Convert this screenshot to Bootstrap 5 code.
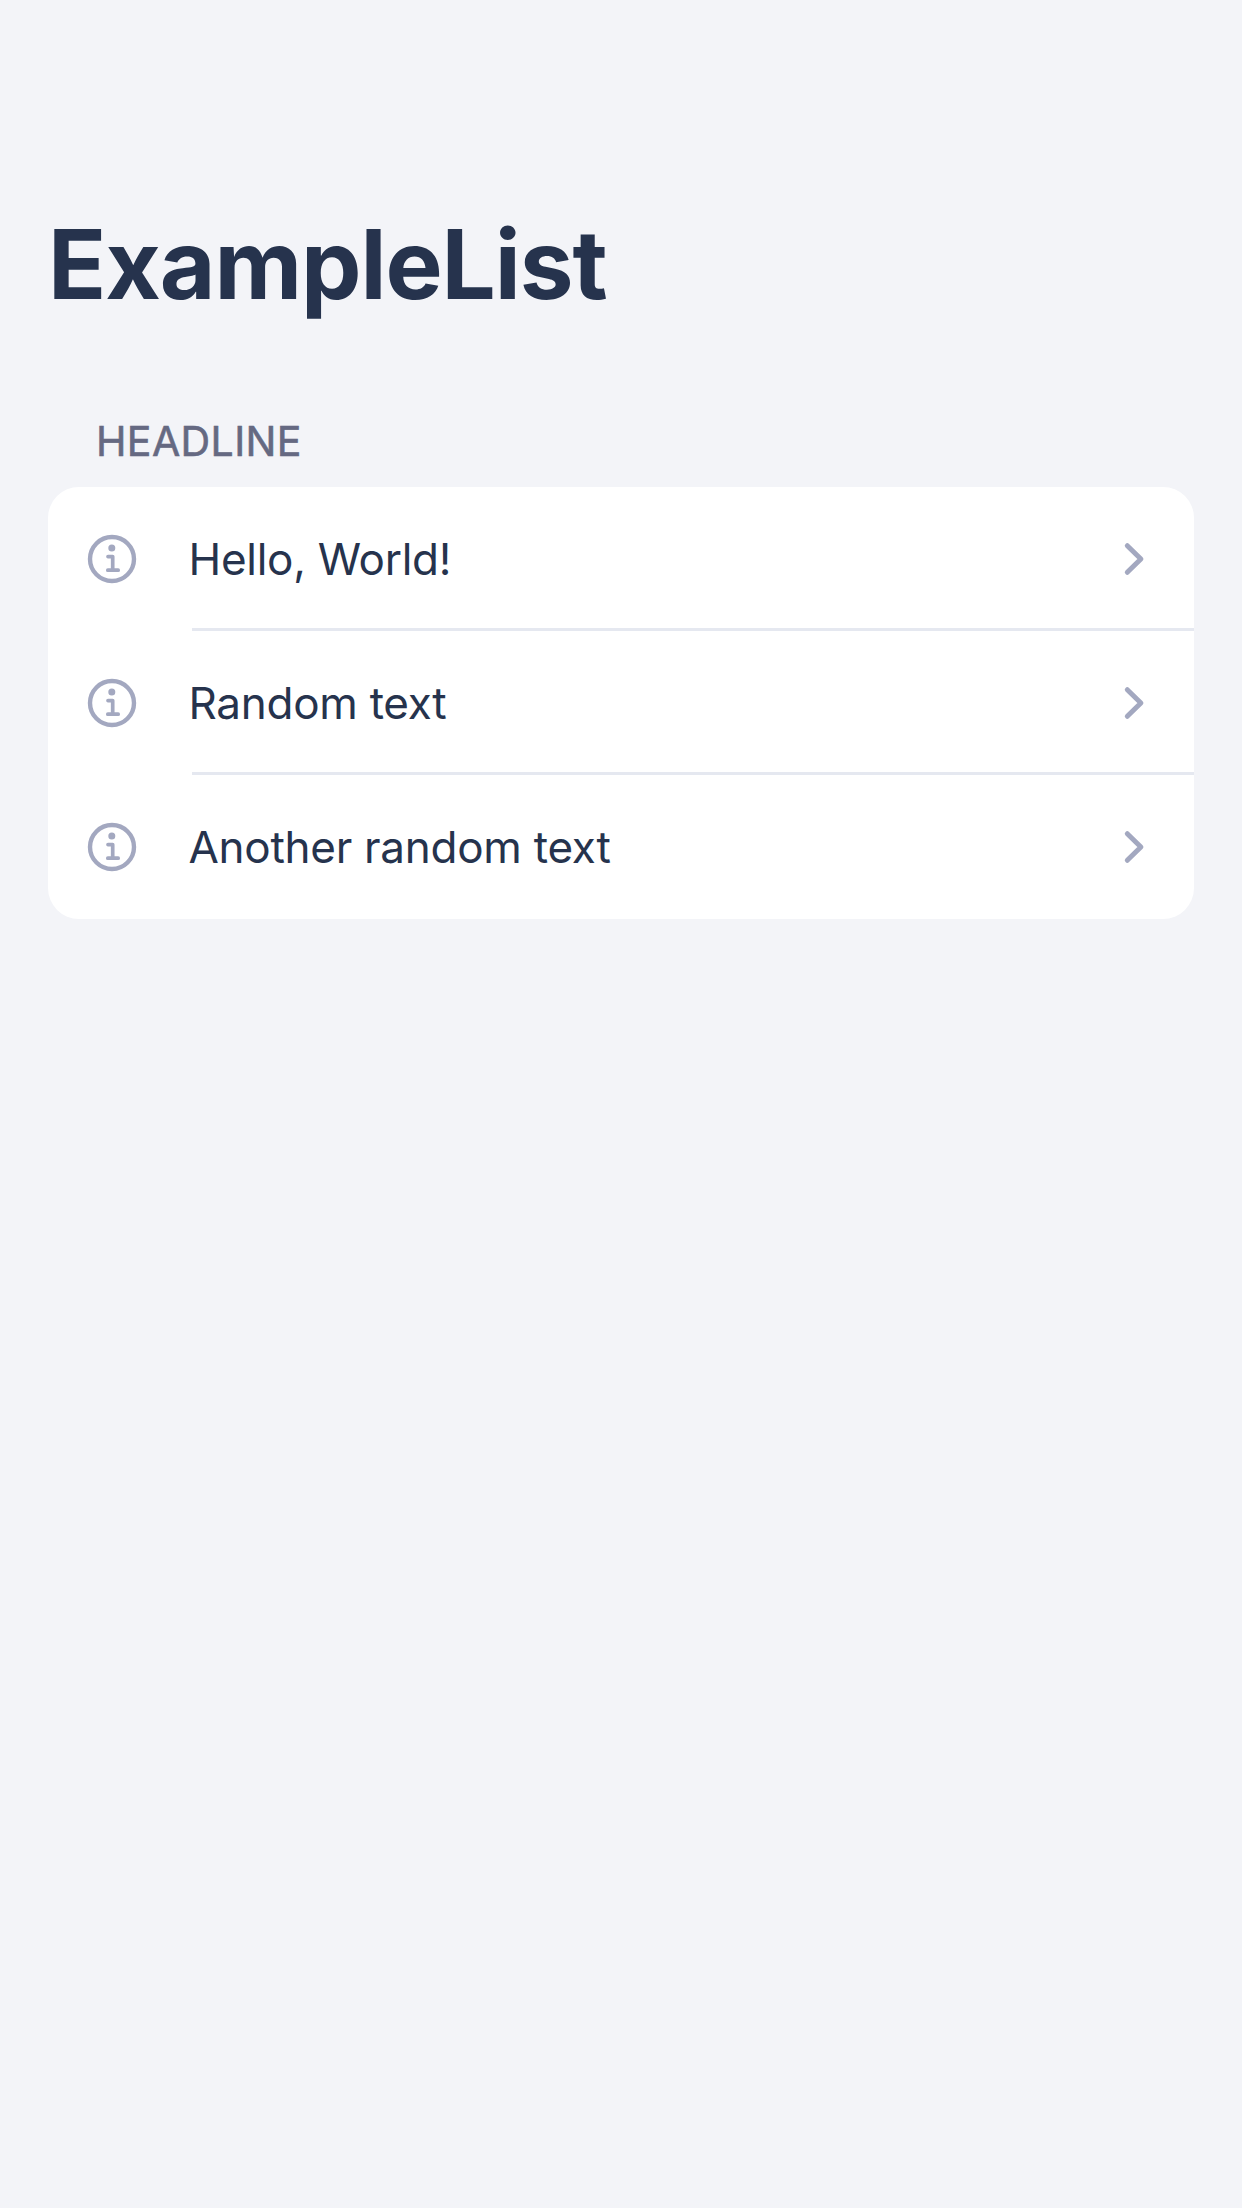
<!DOCTYPE html>
<html lang="en">
<head>
<meta charset="utf-8">
<meta name="viewport" content="width=device-width, initial-scale=1">
<title>ExampleList</title>
<link href="https://cdn.jsdelivr.net/npm/bootstrap@5.3.0/dist/css/bootstrap.min.css" rel="stylesheet">
<style>
  body { background: #f3f4f8; color: #26334d; font-family: Inter, "Liberation Sans", sans-serif; min-height: 2208px; }
  .screen { padding: 206px 48px 0; }
  .screen-title { font-size: 96px; line-height: 116px; font-weight: 700; letter-spacing: -1.05px; }
  .section-title { color: #656982; font-size: 41px; line-height: 50px; margin-top: 94px; padding-left: 48px; letter-spacing: .4px; -webkit-text-stroke: .6px #656982; }
  .inset-list { border-radius: 31px; overflow: hidden; margin-top: 21px; }
  .inset-row { height: 144px; padding-left: 39px; }
  .inset-body { margin-left: 55px; padding-right: 48px; height: 144px; }
  .inset-row:not(:last-child) .inset-body { box-shadow: inset 0 -3px #e5e8f0; }
  .inset-label { color: #26334d; font-size: 44px; line-height: 56px; margin-left: -3.5px; letter-spacing: -.27px; }
  .glyph { color: #a3a8c0; }
</style>
</head>
<body>
<main class="screen">
  <h1 class="screen-title mb-0">ExampleList</h1>
  <h2 class="section-title fw-normal mb-0">HEADLINE</h2>
  <div class="inset-list bg-white">
    <a href="#" class="inset-row d-flex align-items-center text-decoration-none">
      <svg class="glyph flex-shrink-0" width="50" height="50" viewBox="0 0 50 50" fill="none" stroke="currentColor" stroke-linecap="round" stroke-linejoin="round"><circle cx="25" cy="25" r="22" stroke-width="4.4"/><circle cx="24.8" cy="14" r="3.5" fill="currentColor" stroke="none"/><path d="M21 22.6h4.7v13.6M20.8 36.2h10.4" stroke-width="3.7"/></svg>
      <div class="inset-body d-flex align-items-center justify-content-between flex-grow-1">
        <span class="inset-label">Hello, World!</span>
        <svg class="glyph" width="24" height="36" viewBox="0 0 24 36" fill="none" stroke="currentColor" stroke-width="5" stroke-linecap="round" stroke-linejoin="round"><path d="M5.3 4.7 18.9 18 5.3 31.3"/></svg>
      </div>
    </a>
    <a href="#" class="inset-row d-flex align-items-center text-decoration-none">
      <svg class="glyph flex-shrink-0" width="50" height="50" viewBox="0 0 50 50" fill="none" stroke="currentColor" stroke-linecap="round" stroke-linejoin="round"><circle cx="25" cy="25" r="22" stroke-width="4.4"/><circle cx="24.8" cy="14" r="3.5" fill="currentColor" stroke="none"/><path d="M21 22.6h4.7v13.6M20.8 36.2h10.4" stroke-width="3.7"/></svg>
      <div class="inset-body d-flex align-items-center justify-content-between flex-grow-1">
        <span class="inset-label">Random text</span>
        <svg class="glyph" width="24" height="36" viewBox="0 0 24 36" fill="none" stroke="currentColor" stroke-width="5" stroke-linecap="round" stroke-linejoin="round"><path d="M5.3 4.7 18.9 18 5.3 31.3"/></svg>
      </div>
    </a>
    <a href="#" class="inset-row d-flex align-items-center text-decoration-none">
      <svg class="glyph flex-shrink-0" width="50" height="50" viewBox="0 0 50 50" fill="none" stroke="currentColor" stroke-linecap="round" stroke-linejoin="round"><circle cx="25" cy="25" r="22" stroke-width="4.4"/><circle cx="24.8" cy="14" r="3.5" fill="currentColor" stroke="none"/><path d="M21 22.6h4.7v13.6M20.8 36.2h10.4" stroke-width="3.7"/></svg>
      <div class="inset-body d-flex align-items-center justify-content-between flex-grow-1">
        <span class="inset-label">Another random text</span>
        <svg class="glyph" width="24" height="36" viewBox="0 0 24 36" fill="none" stroke="currentColor" stroke-width="5" stroke-linecap="round" stroke-linejoin="round"><path d="M5.3 4.7 18.9 18 5.3 31.3"/></svg>
      </div>
    </a>
  </div>
</main>
<script src="https://cdn.jsdelivr.net/npm/bootstrap@5.3.0/dist/js/bootstrap.bundle.min.js"></script>
</body>
</html>
